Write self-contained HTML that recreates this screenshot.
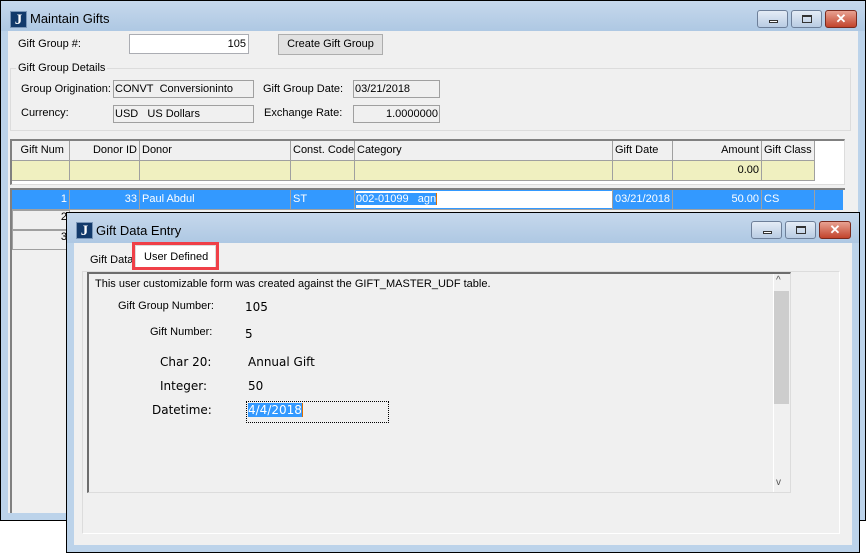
<!DOCTYPE html>
<html><head><style>
*{box-sizing:border-box;margin:0;padding:0}
body{width:866px;height:553px;background:#fff;position:relative;overflow:hidden;font-family:"Liberation Sans",sans-serif;font-size:11px;color:#000}
.a{position:absolute}
.win{border:1px solid #000;background:#bcd3ea}
.tb{background:linear-gradient(#c6d8ec,#aec8e3)}
.cl{background:#f0f0f0}
.ic{width:17px;height:17px;background:#123a6b;color:#fff;font-family:"Liberation Serif",serif;font-weight:bold;font-size:15px;text-align:center;line-height:17px;border:1px solid #7a96b8}
.bt{height:18px;border:1px solid #6d7f99;border-radius:3px;background:linear-gradient(#e4ecf6,#b9cce3)}
.bx{background:linear-gradient(#e8a292,#c2442c);border-color:#7a2a1e}
.tx{border:1px solid #abadb3;background:#fff}
.ro{border:1px solid #a0a0a0;background:#f0f0f0}
.cell{position:absolute;height:20px;border-right:1px solid #a0a0a0;border-bottom:1px solid #a0a0a0;line-height:19px;padding:0 2px;white-space:nowrap;overflow:hidden}
.dj{font-family:"DejaVu Sans",sans-serif;font-size:12px}
</style></head><body>
<div class="a win" style="left:0;top:0;width:866px;height:521px"></div>
<div class="a tb" style="left:1px;top:1px;width:864px;height:30px"></div>
<div class="a ic" style="left:10px;top:11px">J</div>
<div class="a" style="left:30px;top:11px;font-size:13px">Maintain Gifts</div>
<div class="a bt" style="left:757px;top:10px;width:31px"><div class="a" style="left:11px;top:9px;width:9px;height:3px;border:1px solid #333;background:#fff"></div></div>
<div class="a bt" style="left:791px;top:10px;width:31px"><div class="a" style="left:10px;top:4px;width:10px;height:8px;border:1px solid #333;border-top-width:2px"></div></div>
<div class="a bt bx" style="left:825px;top:10px;width:32px;color:#fff;font-weight:bold;text-align:center;line-height:15px;font-size:13px">✕</div>
<div class="a cl" style="left:8px;top:31px;width:850px;height:482px"></div>
<div class="a" style="left:18px;top:38px">Gift Group #:</div>
<div class="a tx" style="left:129px;top:34px;width:120px;height:20px;text-align:right;padding:3px 2px">105</div>
<div class="a" style="left:278px;top:34px;width:105px;height:21px;border:1px solid #adadad;background:#e1e1e1;text-align:center;line-height:19px">Create Gift Group</div>
<div class="a" style="left:10px;top:68px;width:841px;height:63px;border:1px solid #dcdcdc"></div>
<div class="a cl" style="left:16px;top:62px;padding:0 2px">Gift Group Details</div>
<div class="a" style="left:21px;top:83px">Group Origination:</div>
<div class="a ro" style="left:113px;top:80px;width:141px;height:18px;padding:2px 1px">CONVT&nbsp; Conversioninto</div>
<div class="a" style="left:263px;top:83px">Gift Group Date:</div>
<div class="a ro" style="left:353px;top:80px;width:87px;height:18px;padding:2px 1px">03/21/2018</div>
<div class="a" style="left:21px;top:107px">Currency:</div>
<div class="a ro" style="left:113px;top:105px;width:141px;height:18px;padding:2px 1px">USD&nbsp;&nbsp; US Dollars</div>
<div class="a" style="left:264px;top:107px">Exchange Rate:</div>
<div class="a ro" style="left:353px;top:105px;width:87px;height:18px;padding:2px 1px;text-align:right">1.0000000</div>
<div class="a" style="left:10px;top:139px;width:835px;height:46px;border:1px solid #dcdcdc;border-left:2px solid #808080;border-top:2px solid #808080;background:#fff"></div>
<div class="a" style="left:12px;top:141px">
<div class="cell" style="left:0;width:58px;text-align:right;background:#f0f0f0">Gift Num&nbsp;</div>
<div class="cell" style="left:58px;width:70px;text-align:right;background:#f0f0f0">Donor ID</div>
<div class="cell" style="left:128px;width:151px;background:#f0f0f0">Donor</div>
<div class="cell" style="left:279px;width:64px;background:#f0f0f0">Const. Code</div>
<div class="cell" style="left:343px;width:258px;background:#f0f0f0">Category</div>
<div class="cell" style="left:601px;width:60px;background:#f0f0f0">Gift Date</div>
<div class="cell" style="left:661px;width:89px;text-align:right;background:#f0f0f0">Amount</div>
<div class="cell" style="left:750px;width:53px;background:#f0f0f0">Gift Class</div>
<div class="cell" style="top:20px;left:0;width:58px;background:#f0f0c0"></div>
<div class="cell" style="top:20px;left:58px;width:70px;background:#f0f0c0"></div>
<div class="cell" style="top:20px;left:128px;width:151px;background:#f0f0c0"></div>
<div class="cell" style="top:20px;left:279px;width:64px;background:#f0f0c0"></div>
<div class="cell" style="top:20px;left:343px;width:258px;background:#f0f0c0"></div>
<div class="cell" style="top:20px;left:601px;width:60px;background:#f0f0c0"></div>
<div class="cell" style="top:20px;left:661px;width:89px;text-align:right;background:#f0f0c0">0.00</div>
<div class="cell" style="top:20px;left:750px;width:53px;background:#f0f0c0"></div>
</div>
<div class="a" style="left:10px;top:188px;width:835px;height:325px;border-left:2px solid #808080;border-top:2px solid #808080;background:#f0f0f0"></div>
<div class="a" style="left:12px;top:190px;width:831px;height:20px;background:#3399ff"></div>
<div class="a" style="left:12px;top:190px;color:#fff">
<div class="cell" style="left:0;width:58px;text-align:right">1</div>
<div class="cell" style="left:58px;width:70px;text-align:right">33</div>
<div class="cell" style="left:128px;width:151px">Paul Abdul</div>
<div class="cell" style="left:279px;width:64px">ST</div>
<div class="cell" style="left:343px;width:258px;padding:0"><span style="display:block;margin:1px;width:256px;height:17px;line-height:16px;background:#fff;color:#000"><span style="background:#3399ff;color:#fff">002-01099&nbsp;&nbsp; agn</span><span style="border-left:1px solid #e07000"></span></span></div>
<div class="cell" style="left:601px;width:60px">03/21/2018</div>
<div class="cell" style="left:661px;width:89px;text-align:right">50.00</div>
<div class="cell" style="left:750px;width:53px">CS</div>
</div>
<div class="a" style="left:12px;top:210px;width:58px;height:20px;border:1px solid #a0a0a0;background:#f0f0f0;text-align:right;padding-right:2px">2</div>
<div class="a" style="left:12px;top:230px;width:58px;height:20px;border:1px solid #a0a0a0;background:#f0f0f0;text-align:right;padding-right:2px">3</div>
<div class="a win" style="left:66px;top:212px;width:794px;height:341px;border-color:#000"></div>
<div class="a tb" style="left:67px;top:213px;width:792px;height:30px"></div>
<div class="a ic" style="left:76px;top:222px">J</div>
<div class="a" style="left:96px;top:223px;font-size:13px">Gift Data Entry</div>
<div class="a bt" style="left:751px;top:221px;width:31px"><div class="a" style="left:11px;top:9px;width:9px;height:3px;border:1px solid #333;background:#fff"></div></div>
<div class="a bt" style="left:785px;top:221px;width:31px"><div class="a" style="left:10px;top:4px;width:10px;height:8px;border:1px solid #333;border-top-width:2px"></div></div>
<div class="a bt bx" style="left:819px;top:221px;width:32px;color:#fff;font-weight:bold;text-align:center;line-height:15px;font-size:13px">✕</div>
<div class="a cl" style="left:74px;top:243px;width:778px;height:302px"></div>
<div class="a" style="left:82px;top:271px;width:758px;height:263px;border:1px solid #fff;border-top-color:#dcdcdc;border-left-color:#dcdcdc"></div>
<div class="a" style="left:90px;top:254px">Gift Data</div>
<div class="a" style="left:135px;top:245px;width:81px;height:23px;background:#fff;border:1px solid #dcdcdc;border-bottom:none"></div>
<div class="a" style="left:132px;top:242px;width:87px;height:28px;border:3px solid #f04048"></div>
<div class="a" style="left:144px;top:251px">User Defined</div>
<div class="a" style="left:87px;top:272px;width:704px;height:221px;border:1px solid #dcdcdc;border-top:2px solid #6d6d6d;border-left:2px solid #6d6d6d"></div>
<div class="a" style="left:773px;top:274px;width:17px;height:218px;border-left:1px solid #fff;background:#f0f0f0"></div>
<div class="a" style="left:774px;top:291px;width:15px;height:113px;background:#cdcdcd"></div>
<div class="a" style="left:776px;top:275px;font-size:10px;color:#555">^</div>
<div class="a" style="left:776px;top:477px;font-size:10px;color:#555">v</div>
<div class="a" style="left:95px;top:278px">This user customizable form was created against the GIFT_MASTER_UDF table.</div>
<div class="a" style="left:118px;top:300px">Gift Group Number:</div>
<div class="a dj" style="left:245px;top:300px">105</div>
<div class="a" style="left:150px;top:326px">Gift Number:</div>
<div class="a dj" style="left:245px;top:327px">5</div>
<div class="a dj" style="left:160px;top:355px">Char 20:</div>
<div class="a dj" style="left:248px;top:355px">Annual Gift</div>
<div class="a dj" style="left:160px;top:379px">Integer:</div>
<div class="a dj" style="left:248px;top:379px">50</div>
<div class="a dj" style="left:152px;top:403px">Datetime:</div>
<div class="a" style="left:246px;top:401px;width:143px;height:22px;border:1px dotted #000;padding:1px"><span class="dj" style="background:#3399ff;color:#fff;border-right:1px solid #e07000">4/4/2018</span></div>
</body></html>
